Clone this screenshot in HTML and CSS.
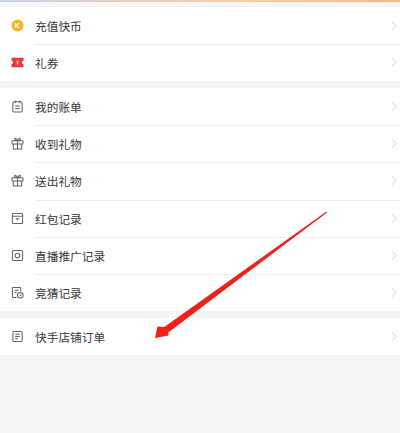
FILE: index.html
```html
<!DOCTYPE html>
<html lang="zh-CN">
<head>
    <meta charset="UTF-8">
    <meta name="viewport" content="width=device-width, initial-scale=1.0">
    <title>钱包</title>
    <link rel="stylesheet" href="styles.css">
</head>
<body>
    <div class="page">
        <div class="top-line"></div>

        <div class="group">
            <div class="row">
                <svg class="icon" viewBox="0 0 14 14"><circle cx="7" cy="7" r="6.5" fill="#f5b62e"/><path d="M5 4.500v5M8.800 4.500 5.600 7l3.200 2.500" fill="none" stroke="#fff" stroke-width="1.200"/></svg>
                <span class="label">充值快币</span>
                <svg class="chevron" viewBox="0 0 8 14"><path d="M1 1l6 6-6 6"/></svg>
            </div>
            <div class="row">
                <svg class="icon" viewBox="0 0 14 14"><path d="M0.500 2h13v3.200a1.800 1.800 0 0 0 0 3.600V12h-13V8.800a1.800 1.800 0 0 0 0-3.600z" fill="#e8383d"/><path d="M5.500 4.500 7 6.500l1.500-2M7 6.500v3M5.500 7.500h3" fill="none" stroke="#fbd3a0" stroke-width=".8"/></svg>
                <span class="label">礼券</span>
                <svg class="chevron" viewBox="0 0 8 14"><path d="M1 1l6 6-6 6"/></svg>
            </div>
        </div>

        <div class="group list">
            <div class="row">
                <svg class="icon line" viewBox="0 0 14 14"><rect x="2" y="2" width="10" height="11" rx="1.500"/><path d="M4.500 .5v3M9.500 .5v3M4.500 6.500h5M4.500 9.500h5"/></svg>
                <span class="label">我的账单</span>
                <svg class="chevron" viewBox="0 0 8 14"><path d="M1 1l6 6-6 6"/></svg>
            </div>
            <div class="row">
                <svg class="icon line" viewBox="0 0 14 14"><rect x="1" y="4" width="12" height="3.500" rx=".8"/><path d="M2.500 7.500v5.500h9V7.500M7 4v9M7 4C6 1.500 4 .5 4 2.200 4 3.200 5 4 7 4c1-2.500 3-3.500 3-1.800C10 3.200 9 4 7 4z"/></svg>
                <span class="label">收到礼物</span>
                <svg class="chevron" viewBox="0 0 8 14"><path d="M1 1l6 6-6 6"/></svg>
            </div>
            <div class="row">
                <svg class="icon line" viewBox="0 0 14 14"><rect x="1" y="4" width="12" height="3.500" rx=".8"/><path d="M2.500 7.500v5.500h9V7.500M7 4v9M7 4C6 1.500 4 .5 4 2.200 4 3.200 5 4 7 4c1-2.500 3-3.500 3-1.800C10 3.200 9 4 7 4z"/></svg>
                <span class="label">送出礼物</span>
                <svg class="chevron" viewBox="0 0 8 14"><path d="M1 1l6 6-6 6"/></svg>
            </div>
            <div class="row">
                <svg class="icon line" viewBox="0 0 14 14"><rect x="1.500" y="1.500" width="11" height="11" rx="1"/><path d="M1.500 4.500h11M5 6.500 7 8l2-1.500"/></svg>
                <span class="label">红包记录</span>
                <svg class="chevron" viewBox="0 0 8 14"><path d="M1 1l6 6-6 6"/></svg>
            </div>
            <div class="row">
                <svg class="icon line" viewBox="0 0 14 14"><rect x="1.500" y="1.500" width="11" height="11" rx="1.500"/><circle cx="7" cy="7" r="2.500"/></svg>
                <span class="label">直播推广记录</span>
                <svg class="chevron" viewBox="0 0 8 14"><path d="M1 1l6 6-6 6"/></svg>
            </div>
            <div class="row">
                <svg class="icon line" viewBox="0 0 14 14"><path d="M6 12.500H2.500a1 1 0 0 1-1-1v-9a1 1 0 0 1 1-1h7a1 1 0 0 1 1 1V6M4 4.500h4M4 7h2"/><circle cx="10" cy="10" r="3"/><path d="M10 8.800V10h1.200"/></svg>
                <span class="label">竞猜记录</span>
                <svg class="chevron" viewBox="0 0 8 14"><path d="M1 1l6 6-6 6"/></svg>
            </div>
        </div>

        <div class="group">
            <div class="row">
                <svg class="icon line" viewBox="0 0 14 14"><rect x="2" y="1.500" width="10" height="11" rx="1.500"/><path d="M4.500 4.500h5M4.500 7h5M4.500 9.500h3"/></svg>
                <span class="label">快手店铺订单</span>
                <svg class="chevron" viewBox="0 0 8 14"><path d="M1 1l6 6-6 6"/></svg>
            </div>
        </div>

        <!-- red arrow drawn over the screenshot -->
        <svg class="arrow" viewBox="0 0 400 433"><path d="M326.500 211.500 327 212.500 168.300 332.400 168.500 335.500 155 338 157.500 326.500 164.300 327z" fill="#f0201a"/></svg>
    </div>
</body>
</html>
```

FILE: styles.css
```css
html, body {
    margin: 0;
    padding: 0;
}

.page {
    position: relative;
    width: 400px;
    height: 433px;
    overflow: hidden;
    background: #f5f5f5;
    font-family: "Noto Sans CJK SC", "Liberation Sans", sans-serif;
}

.top-line {
    height: 2px;
    margin-bottom: 5px;
    background: linear-gradient(to right, #c9d3e6, #f6cda6 60%, #f8b98a);
}

.group {
    display: flex;
    flex-direction: column;
    margin-bottom: 7px;
    background: white;
}

.row {
    display: flex;
    align-items: center;
    height: 37px;
    padding: 0 3px 0 11px;
    position: relative;
}

.list .row {
    height: 37.200px;
}

.row + .row::before {
    content: "";
    position: absolute;
    top: 0;
    left: 35px;
    right: 0;
    height: 1px;
    background: #ececec;
}

.icon {
    width: 13px;
    height: 13px;
    flex-shrink: 0;
    margin-right: 11px;
}

.icon.line {
    fill: none;
    stroke: #5f6166;
    stroke-width: 1.100;
}

.label {
    flex: 1;
    font-size: 11.700px;
    color: #33353a;
}

.chevron {
    width: 6px;
    height: 11px;
    fill: none;
    stroke: #c9c9c9;
    stroke-width: 1.200;
}

.arrow {
    position: absolute;
    top: 0;
    left: 0;
    width: 400px;
    height: 433px;
    pointer-events: none;
}
```
